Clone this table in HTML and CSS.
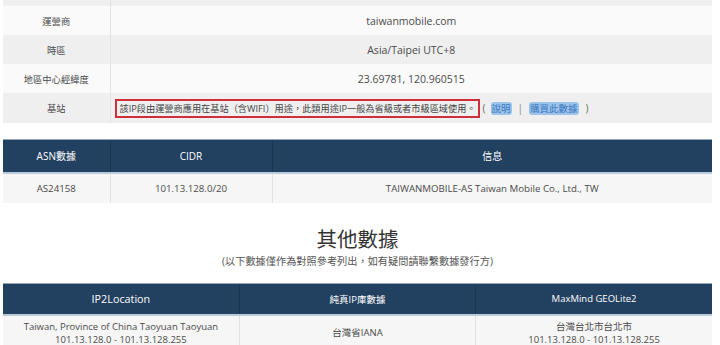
FILE: index.html
```html
<!DOCTYPE html>
<html>
<head>
<meta charset="utf-8">
<link rel="stylesheet" href="styles.css">
</head>
<body>
<div class="page">
  <table class="info">
    <tr class="partial"><th></th><td></td></tr>
    <tr class="light"><th>運營商</th><td>taiwanmobile.com</td></tr>
    <tr class="dark"><th>時區</th><td>Asia/Taipei UTC+8</td></tr>
    <tr class="light"><th>地區中心經緯度</th><td>23.69781, 120.960515</td></tr>
    <tr class="dark station"><th>基站</th><td class="left"><span class="redbox">該IP段由運營商應用在基站（含WIFI）用途，此類用途IP一般為省級或者市級區域使用。</span><span class="paren">(</span><a class="hl">說明</a><span class="sep">|</span><a class="hl">購買此數據</a><span class="paren last">)</span></td></tr>
  </table>

  <table class="grid asn">
    <thead>
      <tr><th class="c1">ASN數據</th><th class="c2">CIDR</th><th>信息</th></tr>
    </thead>
    <tbody>
      <tr><td>AS24158</td><td>101.13.128.0/20</td><td>TAIWANMOBILE-AS Taiwan Mobile Co., Ltd., TW</td></tr>
    </tbody>
  </table>

  <div class="section-title">
    <h2>其他數據</h2>
    <p>(以下數據僅作為對照參考列出，如有疑問請聯繫數據發行方)</p>
  </div>

  <table class="grid other">
    <thead>
      <tr><th class="big">IP2Location</th><th>純真IP庫數據</th><th>MaxMind GEOLite2</th></tr>
    </thead>
    <tbody>
      <tr>
        <td>Taiwan, Province of China Taoyuan Taoyuan<br>101.13.128.0 - 101.13.128.255</td>
        <td>台灣省IANA</td>
        <td>台灣台北市台北市<br>101.13.128.0 - 101.13.128.255</td>
      </tr>
    </tbody>
  </table>
</div>
</body>
</html>
```

FILE: styles.css
```css
* { box-sizing: border-box; }
html, body { margin: 0; padding: 0; background: #ffffff; }
body {
  font-family: "Open Sans", "Noto Sans CJK TC", sans-serif;
  font-size: 10px;
  color: #4a4a4a;
}
.page {
  width: 712px;
  padding-left: 3px;
}
table {
  width: 100%;
  border-collapse: collapse;
  table-layout: fixed;
}
.info th, .info td {
  font-weight: normal;
  text-align: center;
  height: 29px;
  padding: 0;
}
.info th {
  width: 107px;
  font-size: 9.3px;
  border-right: 1px solid #e4e4e4;
}
.info td { font-size: 10.5px; }
.info tr.partial th, .info tr.partial td { height: 6px; background: #efefef; }
.info tr.light th, .info tr.light td { background: #fafafa; }
.info tr.dark th, .info tr.dark td { background: #efefef; }
.info tr.station th, .info tr.station td { height: 30px; }
.info td.left { text-align: left; padding-left: 4px; font-size: 9.2px; }
.redbox {
  display: inline-block;
  border: 2px solid #cf2f3a;
  padding: 1px 2px 1px 3px;
  line-height: 13px;
  color: #444;
}
.paren { margin: 0 5px 0 3px; color: #666; font-size: 10px; }
.paren.last { margin: 0 0 0 7px; }
.sep { margin: 0 6px; color: #888; font-size: 10px; }
.hl {
  background: #9cc4ea;
  color: #3a78c0;
  border-radius: 3px;
  padding: 0 1px;
  font-size: 9.5px;
}

.grid { margin-top: 16px; }
.grid thead th {
  background: #22405f;
  color: #ffffff;
  font-weight: normal;
  height: 33px;
  font-size: 10px;
  border-top: 1px solid #8fa6bc;
  border-bottom: 2px solid #b9cad9;
  border-left: 1px solid #1a3552;
}
.grid thead th:first-child { border-left: none; }
.grid tbody td {
  background: #f6f6f6;
  text-align: center;
  height: 30px;
  font-size: 9.7px;
  border-left: 1px solid #e2e2e2;
  padding: 0;
}
.grid tbody td:first-child { border-left: none; }
.asn .c1 { width: 107px; }
.asn .c2 { width: 162px; }

.section-title { text-align: center; margin-top: 24px; }
.section-title h2 {
  margin: 0;
  font-size: 20.5px;
  font-weight: normal;
  line-height: 24px;
  color: #333;
}
.section-title p {
  margin: 3px 0 0;
  font-size: 10.2px;
  line-height: 14px;
  color: #555;
}
.other { margin-top: 15px; }
.other thead th { height: 32px; font-size: 9.5px; }
.other thead th.big { font-size: 10.8px; }
.other tbody td { line-height: 13px; height: 34px; font-size: 9.5px; vertical-align: middle; }
```
